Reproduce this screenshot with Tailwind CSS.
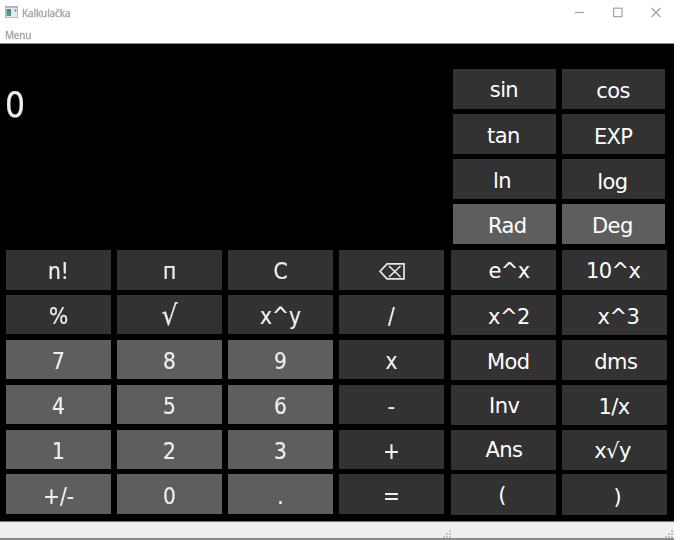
<!DOCTYPE html>
<html lang="cs">
<head>
<meta charset="utf-8">
<title>Kalkulačka</title>
<script src="https://cdn.jsdelivr.net/npm/@tailwindcss/browser@4"></script>
</head>
<body class="bg-white w-[684px] h-[540px] overflow-hidden">
<div class="w-[674px] h-[540px] flex flex-col">
  <header class="h-[25px] flex items-start shrink-0 font-['Noto_Sans',sans-serif] text-[#a3a3a3]">
    <svg class="ml-[5px] mt-[6px] blur-[0.4px]" width="13" height="12" viewBox="0 0 13 12"><rect x=".5" y=".5" width="12" height="11" fill="#e6e8ea" stroke="#b9bdc0"/><path d="M0 1H13" stroke="#a9aeb2" stroke-width="1.5"/><rect x="1.5" y="3" width="4.5" height="7" fill="#4c8794"/><rect x="2" y="6" width="3" height="4" fill="#5b9a78"/><path d="M10.5 3v3" stroke="#7d9fc0" stroke-width="1.6"/></svg>
    <span class="ml-[4px] mt-[6px] text-[10px] leading-[14px] tracking-[-0.15px] blur-[0.5px] [-webkit-text-stroke:0.3px]">Kalkulačka</span>
    <div class="ml-auto mr-[13px] mt-[7px] flex gap-[28px] blur-[0.4px]">
      <svg width="10" height="11" viewBox="0 0 10 11" fill="none" stroke="#a3a3a3" stroke-width="1.2"><path d="M0 5.5H9"/></svg>
      <svg width="10" height="11" viewBox="0 0 10 11" fill="none" stroke="#a3a3a3" stroke-width="1.2"><rect x=".6" y="1.2" width="8.4" height="8.4"/></svg>
      <svg width="10" height="11" viewBox="0 0 10 11" fill="none" stroke="#a3a3a3" stroke-width="1.2"><path d="M.5 1L9.5 10M9.5 1L.5 10"/></svg>
    </div>
  </header>
  <nav class="h-[19px] shrink-0 pl-[5px] pt-[3px] border-b border-[#8c9090] font-['Noto_Sans',sans-serif] text-[#a3a3a3] text-[10px] leading-[14px] tracking-[-0.2px]"><span class="inline-block blur-[0.5px] [-webkit-text-stroke:0.3px]">Menu</span></nav>
  <main class="h-[477px] shrink-0 bg-black text-white flex">
    <section class="w-[445px] pl-[6px] flex flex-col shrink-0 font-['DejaVu_Sans_Condensed','DejaVu_Sans',sans-serif] font-stretch-condensed text-[#eeeeee] [-webkit-text-stroke:0.2px]">
      <div class="h-[206px] shrink-0 pt-[43px] text-[35px] leading-[36px]"><span class="inline-block -ml-px blur-[0.4px]">0</span></div>
      <div class="grid grid-cols-[repeat(4,105px)] auto-rows-[39.5px] gap-x-[6px] gap-y-[5.4px] text-[22.5px] leading-[22px] text-center blur-[0.4px]">
        <div class="bg-[#323232] pt-[10px]">n!</div><div class="bg-[#323232] pt-[10px]">п</div><div class="bg-[#323232] pt-[10px]">C</div>
        <div class="bg-[#323232] pt-[13px] flex justify-center"><svg width="26" height="17" viewBox="0 0 26 17" fill="none" stroke="#e8e8e8" stroke-width="1.7"><path d="M8 .9H25V15.9H8L1 8.4ZM10 3L21.5 14M21.5 3L10 14"/></svg></div>
        <div class="bg-[#323232] pt-[10.5px]">%</div><div class="bg-[#323232] pt-[10.5px] text-[28px]">√</div><div class="bg-[#323232] pt-[10.5px]">x^y</div><div class="bg-[#323232] pt-[10.5px]">/</div>
        <div class="bg-[#5e5e5e] pt-[10.5px]">7</div><div class="bg-[#5e5e5e] pt-[10.5px]">8</div><div class="bg-[#5e5e5e] pt-[10.5px]">9</div><div class="bg-[#323232] pt-[10.5px]">x</div>
        <div class="bg-[#5e5e5e] pt-[10px]">4</div><div class="bg-[#5e5e5e] pt-[10px]">5</div><div class="bg-[#5e5e5e] pt-[10px]">6</div><div class="bg-[#323232] pt-[10px]">-</div>
        <div class="bg-[#5e5e5e] pt-[10.5px]">1</div><div class="bg-[#5e5e5e] pt-[10.5px]">2</div><div class="bg-[#5e5e5e] pt-[10.5px]">3</div><div class="bg-[#323232] pt-[10.5px]">+</div>
        <div class="bg-[#5e5e5e] pt-[10.5px]">+/-</div><div class="bg-[#5e5e5e] pt-[10.5px]">0</div><div class="bg-[#5e5e5e] pt-[10.5px]">.</div><div class="bg-[#323232] pt-[10.5px]">=</div>
      </div>
    </section>
    <section class="flex flex-col pl-[6px] font-['DejaVu_Sans',sans-serif] text-[21px] leading-[20px] tracking-[-0.6px] whitespace-nowrap">
      <div class="h-[206px] shrink-0 pt-[25px] pl-[2px] grid grid-cols-[103px_103px] auto-rows-[40px] gap-x-[6px] gap-y-[5px]">
        <div class="bg-[#323232] pl-[36.8px] pt-[11px]">sin</div>
        <div class="bg-[#323232] pl-[34.3px] pt-[12px]">cos</div>
        <div class="bg-[#323232] pl-[34px] pt-[12px]">tan</div>
        <div class="bg-[#323232] pl-[31.9px] pt-[13px]">EXP</div>
        <div class="bg-[#323232] pl-[40px] pt-[12px]">ln</div>
        <div class="bg-[#323232] pl-[35.3px] pt-[13px]">log</div>
        <div class="bg-[#5e5e5e] pl-[35px] pt-[12px]">Rad</div>
        <div class="bg-[#5e5e5e] pl-[30px] pt-[12px]">Deg</div>
      </div>
      <div class="grid grid-cols-[105px_105.5px] auto-rows-[40.4px] gap-x-[5.5px] gap-y-[4.5px] *:rounded-[1px]">
        <div class="bg-[#323232] pl-[37.5px] pt-[11px]">e^x</div>
        <div class="bg-[#323232] pl-[24.4px] pt-[11px]">10^x</div>
        <div class="bg-[#323232] pl-[37.1px] pt-[12px]">x^2</div>
        <div class="bg-[#323232] pl-[36.1px] pt-[12px]">x^3</div>
        <div class="bg-[#323232] pl-[36px] pt-[12px]">Mod</div>
        <div class="bg-[#323232] pl-[32.8px] pt-[12px]">dms</div>
        <div class="bg-[#323232] pl-[38.1px] pt-[11px]">Inv</div>
        <div class="bg-[#323232] pl-[37px] pt-[12px]">1/x</div>
        <div class="bg-[#323232] pl-[34.5px] pt-[10px]">Ans</div>
        <div class="bg-[#323232] pl-[32.8px] pt-[11px]">x√y</div>
        <div class="bg-[#323232] pl-[47.3px] pt-[11px]">(</div>
        <div class="bg-[#323232] pl-[52px] pt-[12.6px]">)</div>
      </div>
    </section>
  </main>
  <footer class="h-[19px] shrink-0 bg-[#efefef] border-t border-t-[#777777] border-b-2 border-b-[#8a8a8a] flex items-end">
    <svg class="ml-[443px]" width="8" height="8" viewBox="0 0 8 8" fill="#c4c4c4"><path d="M6 0h2v2H6zM3 3h2v2H3zM6 3h2v2H6zM0 6h2v2H0zM3 6h2v2H3zM6 6h2v2H6z"/></svg>
    <svg class="ml-auto mr-[1px]" width="8" height="8" viewBox="0 0 8 8" fill="#c4c4c4"><path d="M6 0h2v2H6zM3 3h2v2H3zM6 3h2v2H6zM0 6h2v2H0zM3 6h2v2H3zM6 6h2v2H6z"/></svg>
  </footer>
</div>
</body>
</html>
